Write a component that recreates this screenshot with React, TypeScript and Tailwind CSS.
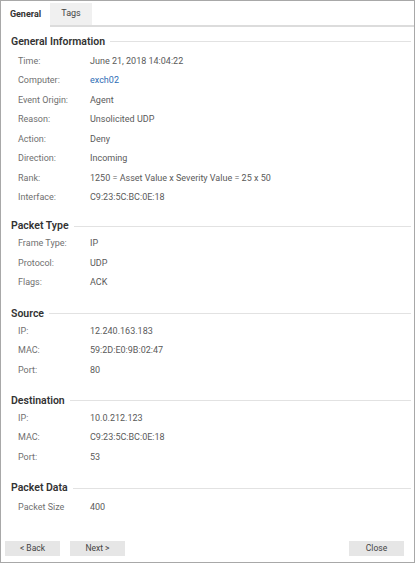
type Row = { label: string; value: string; link?: boolean }

const sections: { title: string; rows: Row[]; gap?: boolean }[] = [
  {
    title: 'General Information',
    gap: true,
    rows: [
      { label: 'Time:', value: 'June 21, 2018 14:04:22' },
      { label: 'Computer:', value: 'exch02', link: true },
      { label: 'Event Origin:', value: 'Agent' },
      { label: 'Reason:', value: 'Unsolicited UDP' },
      { label: 'Action:', value: 'Deny' },
      { label: 'Direction:', value: 'Incoming' },
      { label: 'Rank:', value: '1250 = Asset Value x Severity Value = 25 x 50' },
      { label: 'Interface:', value: 'C9:23:5C:BC:0E:18' },
    ],
  },
  {
    title: 'Packet Type',
    rows: [
      { label: 'Frame Type:', value: 'IP' },
      { label: 'Protocol:', value: 'UDP' },
      { label: 'Flags:', value: 'ACK' },
    ],
  },
  {
    title: 'Source',
    rows: [
      { label: 'IP:', value: '12.240.163.183' },
      { label: 'MAC:', value: '59:2D:E0:9B:02:47' },
      { label: 'Port:', value: '80' },
    ],
  },
  {
    title: 'Destination',
    rows: [
      { label: 'IP:', value: '10.0.212.123' },
      { label: 'MAC:', value: 'C9:23:5C:BC:0E:18' },
      { label: 'Port:', value: '53' },
    ],
  },
  {
    title: 'Packet Data',
    gap: true,
    rows: [{ label: 'Packet Size', value: '400' }],
  },
]

export default function App() {
  return (
    <div
      className="w-[415px] h-[563px] bg-white border border-[#a8a8a8] flex flex-col text-[9px] text-[#555]"
      style={{ fontFamily: 'Roboto, "Liberation Sans", sans-serif' }}
    >
      {/* tab strip */}
      <div className="flex h-[26px] shrink-0">
        <div className="w-[49px] pt-[2px] flex items-center justify-center font-bold text-[#333] bg-white">
          General
        </div>
        <div className="w-[42px] mt-[2px] flex items-center justify-center bg-[#f0f0f0] border-b-2 border-[#dcdcdc] text-[#444]">
          Tags
        </div>
        <div className="flex-1 border-b-2 border-[#dcdcdc]" />
      </div>

      <div className="flex-1 pl-[10px] pr-[3px] pt-[7.5px]">
        {sections.map((s) => (
          <Section key={s.title} title={s.title} rows={s.rows} gap={s.gap} />
        ))}
      </div>

      <div className="flex items-center px-[4px] pb-[6px] shrink-0">
        <Btn>&lt; Back</Btn>
        <div className="w-[10px]" />
        <Btn>Next &gt;</Btn>
        <div className="flex-1" />
        <Btn>Close</Btn>
        <div className="w-[6px]" />
      </div>
    </div>
  )
}

function Section({ title, rows, gap }: { title: string; rows: Row[]; gap?: boolean }) {
  return (
    <section className={gap ? 'mb-[11.75px]' : 'mb-[13.75px]'}>
      <div className="flex items-center h-[14px] gap-[5px]">
        <span className="text-[10.5px] font-semibold text-[#333]">{title}</span>
        <span className="flex-1 h-px bg-[#e2e2e2]" />
      </div>
      <div className={gap ? 'mt-[3px] pl-[7px]' : 'mt-[1px] pl-[7px]'}>
        {rows.map((r) => (
          <div key={r.label} className="flex items-center h-[19.5px]">
            <span className="w-[72px] text-[#707070]">{r.label}</span>
            <span className={r.link ? 'text-[#2d6db5]' : 'text-[#5a5a5a]'}>{r.value}</span>
          </div>
        ))}
      </div>
    </section>
  )
}

function Btn({ children }: { children: React.ReactNode }) {
  return (
    <div className="w-[55px] h-[15px] flex items-center justify-center bg-[#e6e6e6] text-[#444] text-[8.5px]">
      {children}
    </div>
  )
}
